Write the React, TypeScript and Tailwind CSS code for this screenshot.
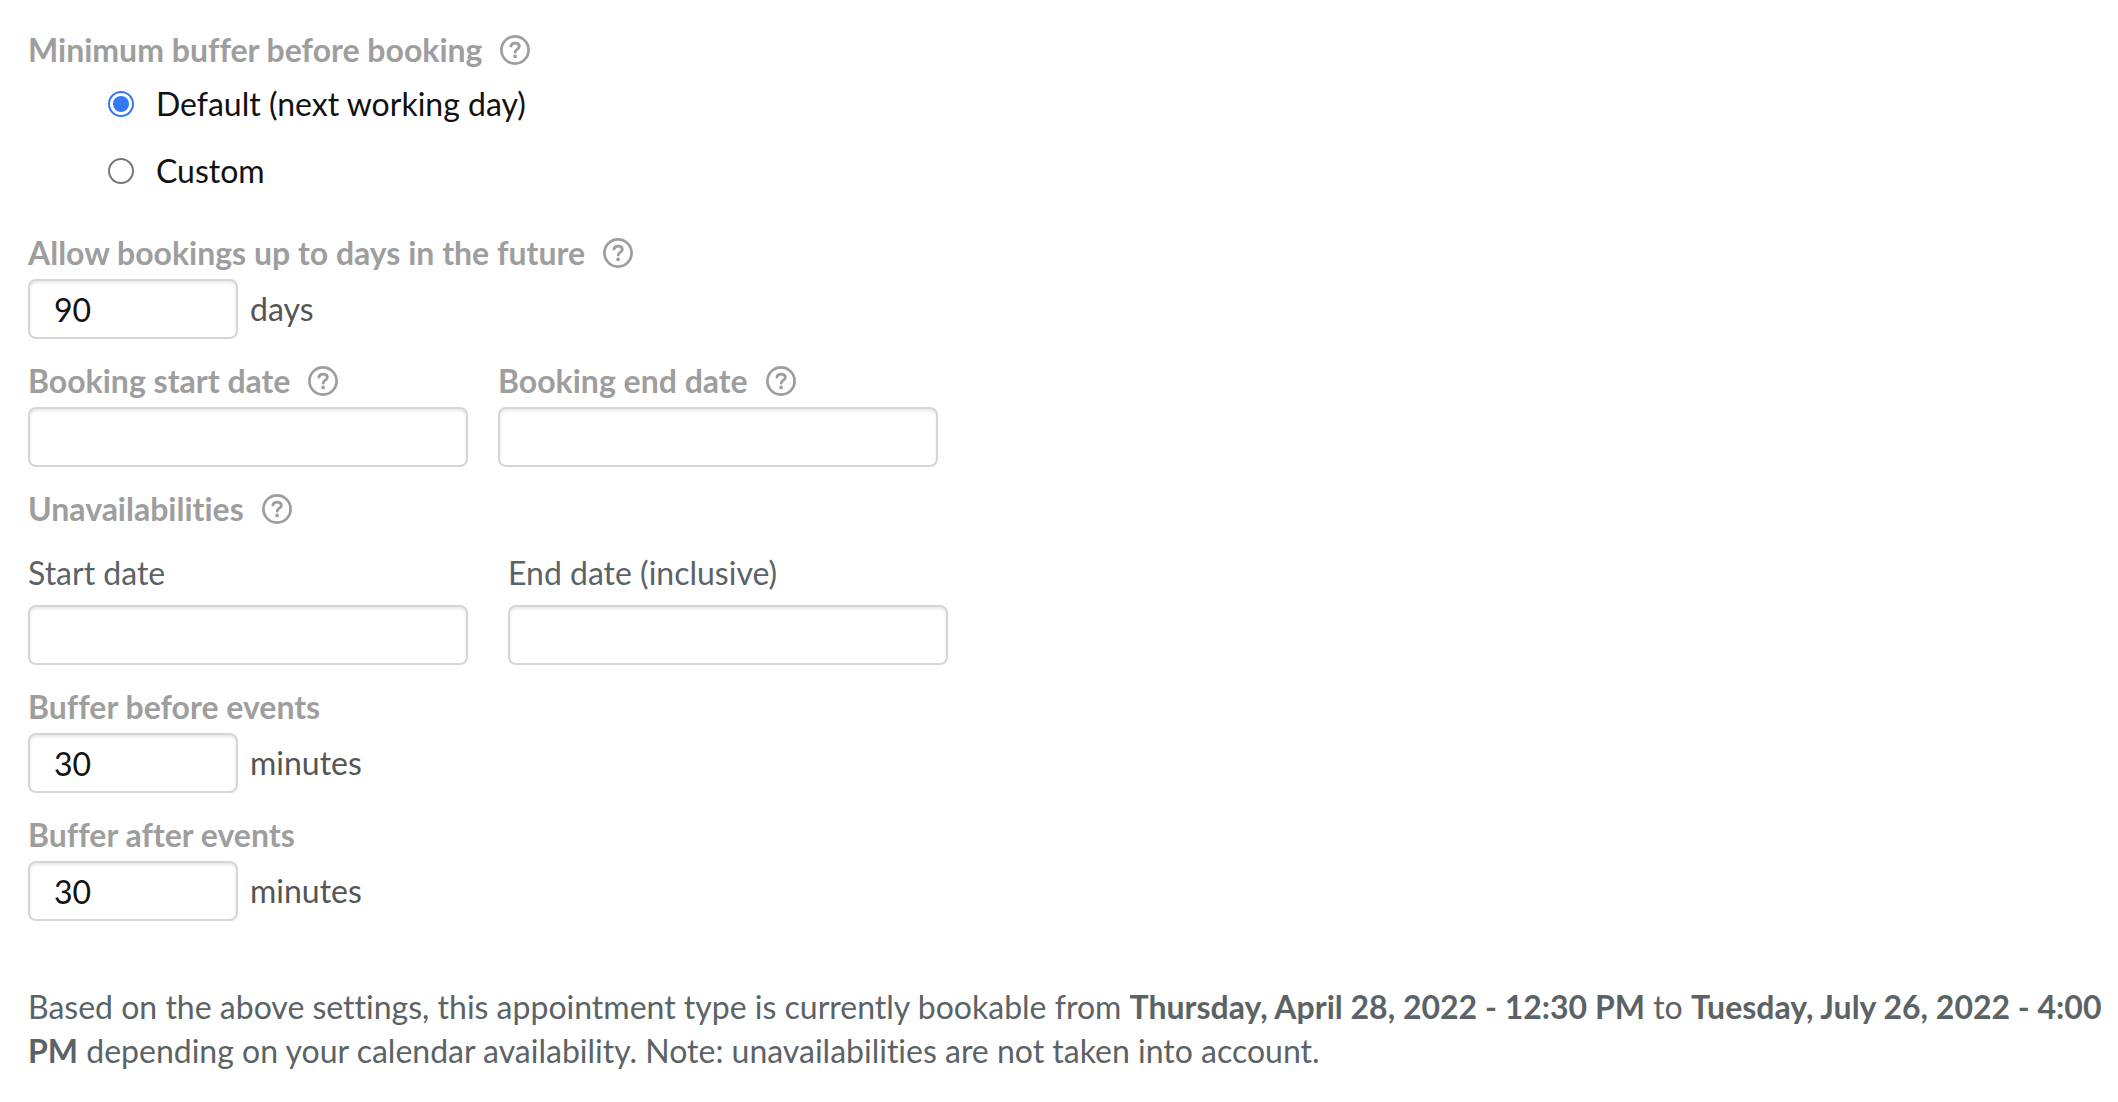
import React, { useState } from 'react';

interface HelpButtonProps {
  topic: string;
}

const HelpButton: React.FC<HelpButtonProps> = ({ topic }) => (
  <button type="button" aria-label={`Help: ${topic}`} className="shrink-0 cursor-pointer text-[#9e9e9e]">
    <svg width="30" height="30" viewBox="0 0 30 30" fill="none" stroke="currentColor" aria-hidden="true">
      <circle cx="15" cy="15" r="13.6" strokeWidth="2.7" />
      <path
        d="M10.9 11.2C11.3 9.2 12.9 8.2 15.2 8.2C17.7 8.2 19.3 9.4 19.3 11.4C19.3 14.1 15.2 14.1 15.2 17.2"
        strokeWidth="2.8"
        strokeLinecap="round"
        strokeLinejoin="round"
      />
      <circle cx="15.1" cy="21.4" r="1.9" fill="currentColor" stroke="none" />
    </svg>
  </button>
);

const labelClass = 'font-bold text-[#9e9e9e]';
const inputClass =
  'h-15 rounded-lg border-2 border-[#d0d6da] bg-white px-6 text-[#111111] shadow-[inset_0_2px_3px_rgba(0,0,0,0.09)] outline-none focus:border-[#3478f6]';
const radioClass =
  'size-[26px] shrink-0 appearance-none rounded-full border-2 border-[#767676] bg-white bg-clip-content p-[3px] checked:border-[#3478f6] checked:bg-[#3478f6]';

interface NumberFieldProps {
  id: string;
  label: string;
  unit: string;
  initial: string;
  help?: boolean;
}

const NumberField: React.FC<NumberFieldProps> = ({ id, label, unit, initial, help }) => {
  const [value, setValue] = useState<string>(initial);

  return (
    <div>
      <div className="flex h-13 items-center gap-[18px]">
        <label htmlFor={id} className={labelClass}>{label}</label>
        {help && <HelpButton topic={label} />}
      </div>
      <div className="flex items-center gap-3">
        <input
          id={id}
          type="text"
          inputMode="numeric"
          value={value}
          onChange={(e) => setValue(e.target.value)}
          className={`${inputClass} w-[210px]`}
        />
        <span className="text-[#555555]">{unit}</span>
      </div>
    </div>
  );
};

interface DateFieldProps {
  id: string;
  label: string;
  plain?: boolean;
}

const DateField: React.FC<DateFieldProps> = ({ id, label, plain }) => {
  const [value, setValue] = useState<string>('');

  return (
    <div className="w-full max-w-[440px]">
      {plain ? (
        <label htmlFor={id} className="mb-[6px] flex h-13 items-center text-[#5b6366]">{label}</label>
      ) : (
        <div className="flex h-13 items-center gap-[18px]">
          <label htmlFor={id} className={labelClass}>{label}</label>
          <HelpButton topic={label} />
        </div>
      )}
      <input
        id={id}
        type="text"
        value={value}
        onChange={(e) => setValue(e.target.value)}
        className={`${inputClass} w-full`}
      />
    </div>
  );
};

const App: React.FC = () => {
  const [buffer, setBuffer] = useState<string>('default');

  return (
    <main className="min-h-screen bg-white py-6 pr-3 pl-7 font-['Lato',sans-serif] text-[32px] leading-11 [font-variant-ligatures:none]">
      <form className="flex flex-col gap-4">
        <div role="radiogroup" aria-labelledby="min-buffer" className="pb-3">
          <div className="flex h-13 items-center gap-[18px]">
            <span id="min-buffer" className={labelClass}>Minimum buffer before booking</span>
            <HelpButton topic="Minimum buffer before booking" />
          </div>
          <div className="flex flex-col gap-[11px] pl-20 text-[#111111]">
            <label className="flex h-14 items-center gap-[22px]">
              <input
                type="radio"
                name="buffer"
                checked={buffer === 'default'}
                onChange={() => setBuffer('default')}
                className={radioClass}
              />
              Default (next working day)
            </label>
            <label className="flex h-14 items-center gap-[22px]">
              <input
                type="radio"
                name="buffer"
                checked={buffer === 'custom'}
                onChange={() => setBuffer('custom')}
                className={radioClass}
              />
              Custom
            </label>
          </div>
        </div>

        <NumberField id="future-days" label="Allow bookings up to days in the future" unit="days" initial="90" help />

        <div className="flex gap-[30px]">
          <DateField id="booking-start" label="Booking start date" />
          <DateField id="booking-end" label="Booking end date" />
        </div>

        <div role="group" aria-labelledby="unavailabilities">
          <div className="flex h-13 items-center gap-[18px]">
            <span id="unavailabilities" className={labelClass}>Unavailabilities</span>
            <HelpButton topic="Unavailabilities" />
          </div>
          <div className="flex gap-10 pt-3">
            <DateField id="unavailable-start" label="Start date" plain />
            <DateField id="unavailable-end" label="End date (inclusive)" plain />
          </div>
        </div>

        <NumberField id="buffer-before" label="Buffer before events" unit="minutes" initial="30" />
        <NumberField id="buffer-after" label="Buffer after events" unit="minutes" initial="30" />
      </form>

      <p className="mt-16 text-[#5b6366]">
        Based on the above settings, this appointment type is currently bookable from{' '}
        <strong>Thursday, April 28, 2022 - 12:30 PM</strong> to{' '}
        <strong>Tuesday, July 26, 2022 - 4:00 PM</strong> depending on your calendar availability. Note:
        unavailabilities are not taken into account.
      </p>
    </main>
  );
};

export default App;
